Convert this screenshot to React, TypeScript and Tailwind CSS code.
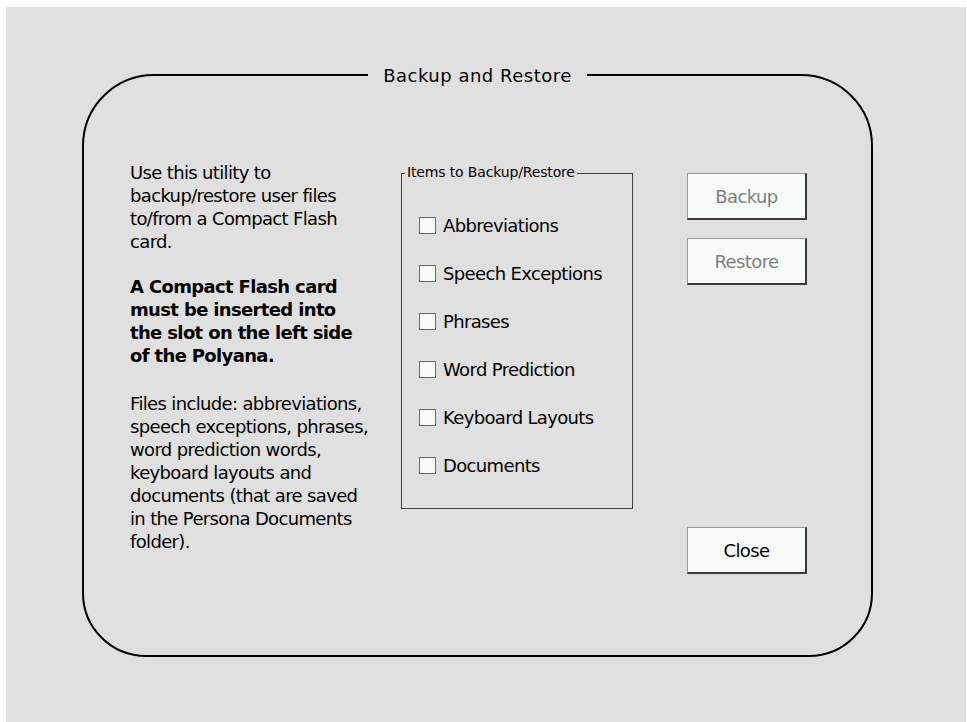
import React from "react";

const items = [
  "Abbreviations",
  "Speech Exceptions",
  "Phrases",
  "Word Prediction",
  "Keyboard Layouts",
  "Documents",
];

function Btn({ label, disabled }: { label: string; disabled?: boolean }) {
  return (
    <div
      className={
        "flex h-[47px] w-[120px] items-center justify-center border-t border-l border-t-[#9a9a9a] border-l-[#9a9a9a] border-b-2 border-r-2 border-b-[#3a3a3a] border-r-[#3a3a3a] bg-[#f7fcf9] text-[18px] leading-[23px] tracking-[-0.6px] " +
        (disabled ? "text-[#808080]" : "text-black")
      }
    >
      {label}
    </div>
  );
}

export default function App() {
  return (
    <div className="min-h-[722px] w-full bg-white pt-[7px] pl-[6px] pr-[1px] font-['DejaVu_Sans',sans-serif] text-black">
      <div className="h-[715px] bg-[#e0e0e0] pt-[67px] pl-[76px]">
        <div className="relative h-[583px] w-[791px] rounded-t-[72px] rounded-b-[64px] border-2 border-black">
          <div className="absolute left-0 right-0 top-[-12px] flex justify-center">
            <span className="bg-[#e0e0e0] px-[15px] text-[18px] leading-[23px] tracking-[0.5px]">
              Backup and Restore
            </span>
          </div>

          <div className="flex items-start pl-[46px]">
            {/* left text */}
            <div className="mt-[85px] w-[271px] text-[18px] leading-[23px] tracking-[-0.65px] whitespace-nowrap">
              <p>
                Use this utility to
                <br />
                backup/restore user files
                <br />
                to/from a Compact Flash
                <br />
                card.
              </p>
              <p className="mt-[22px] font-bold">
                A Compact Flash card
                <br />
                must be inserted into
                <br />
                the slot on the left side
                <br />
                of the Polyana.
              </p>
              <p className="mt-[25px]">
                Files include: abbreviations,
                <br />
                speech exceptions, phrases,
                <br />
                word prediction words,
                <br />
                keyboard layouts and
                <br />
                documents (that are saved
                <br />
                in the Persona Documents
                <br />
                folder).
              </p>
            </div>

            {/* group box */}
            <div className="relative mt-[97px] h-[336px] w-[232px] border border-[#404040]">
              <span className="absolute left-[3px] top-[-10px] bg-[#e0e0e0] px-[2px] text-[14px] leading-[17px] tracking-[-0.15px] whitespace-nowrap">
                Items to Backup/Restore
              </span>
              <div className="flex flex-col pt-[27px] pl-[17px]">
                {items.map((it) => (
                  <div key={it} className="flex h-[48px] items-center">
                    <div className="h-[17px] w-[17px] border border-[#6a6a6a] bg-[#f7fcf9]" />
                    <span className="ml-[7px] text-[18px] leading-[23px] tracking-[-0.65px] whitespace-nowrap">
                      {it}
                    </span>
                  </div>
                ))}
              </div>
            </div>

            {/* buttons */}
            <div className="ml-[54px] mt-[97px] flex flex-col">
              <Btn label="Backup" disabled />
              <div className="mt-[18px]">
                <Btn label="Restore" disabled />
              </div>
              <div className="mt-[242px]">
                <Btn label="Close" />
              </div>
            </div>
          </div>
        </div>
      </div>
    </div>
  );
}
